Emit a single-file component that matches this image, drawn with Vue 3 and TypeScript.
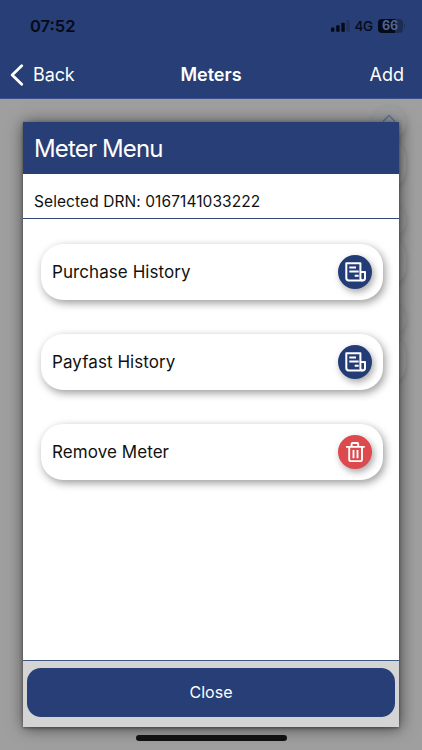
<script setup lang="ts">
interface MenuItem {
  label: string
  icon: 'news' | 'trash'
}

const items: MenuItem[] = [
  { label: 'Purchase History', icon: 'news' },
  { label: 'Payfast History', icon: 'news' },
  { label: 'Remove Meter', icon: 'trash' },
]
const meters: number[] = [1, 2, 3]
</script>

<template>
  <div class="screen">
    <header class="top">
      <div class="status">
        <span class="time">07:52</span>
        <div class="signals">
          <svg class="bars" width="19" height="12" viewBox="0 0 19 12">
            <rect x="0" y="7.5" width="3.4" height="4.3" rx="0.9" fill="#050a18" />
            <rect x="5.2" y="5.2" width="3.4" height="6.6" rx="0.9" fill="#050a18" />
            <rect x="10.4" y="2.7" width="3.4" height="9.1" rx="0.9" fill="#050a18" />
            <rect x="15.4" y="0" width="3.4" height="11.8" rx="0.9" fill="#21345f" />
          </svg>
          <span class="network">4G</span>
          <div class="battery"><span>66</span></div>
          <i class="nub"></i>
        </div>
      </div>
      <nav class="nav">
        <div class="back">
          <svg width="14" height="22" viewBox="0 0 14 22">
            <path d="M11.7 1.7 L2.2 11 L11.7 20.3" fill="none" stroke="#fff" stroke-width="2.8" stroke-linecap="round" stroke-linejoin="round" />
          </svg>
          <span>Back</span>
        </div>
        <h1>Meters</h1>
        <span class="add">Add</span>
      </nav>
    </header>

    <main class="backdrop">
      <div class="meters">
        <div v-for="m in meters" :key="m" class="meter">
          <div class="meter-badge">
            <svg v-if="m === 1" width="14" height="14" viewBox="0 0 14 14">
              <path d="M1 7.5 L7 1.5 L13 7.5" fill="none" stroke="#65799d" stroke-width="1.6" />
            </svg>
          </div>
        </div>
      </div>

      <section class="dialog">
        <h2>Meter Menu</h2>
        <p class="drn">Selected DRN: 0167141033222</p>
        <div class="list">
          <div v-for="item in items" :key="item.label" class="card">
            <span>{{ item.label }}</span>
            <div class="badge" :class="item.icon">
              <svg v-if="item.icon === 'news'" width="22" height="22" viewBox="0 0 22 22" fill="none" stroke="#fff" stroke-width="2" stroke-linejoin="round">
                <path d="M16.4 10.8V2.3H2.3V17Q2.3 19.4 4.7 19.4H18.5" />
                <path d="M16.4 10.9H21V17.3Q21 19.4 18.7 19.4Q16.4 19.4 16.4 17.3Z" />
                <path d="M5.3 6.6H12M5.3 10.6H14.7M10.7 14.7H14.7" />
              </svg>
              <svg v-else width="22" height="22" viewBox="0 0 22 22" fill="none" stroke="#fff" stroke-width="1.9" stroke-linejoin="round">
                <path d="M2 5.9H20.7M7.6 5.5V3Q7.6 2 8.6 2H13.2Q14.2 2 14.2 3V5.5M5.2 6V18.2Q5.2 20.1 7.1 20.1H16.1Q18 20.1 18 18.2V6" />
                <path d="M9.5 9V17.2M13.5 9V17.2" />
              </svg>
            </div>
          </div>
        </div>
        <footer>
          <button type="button">Close</button>
        </footer>
      </section>
      <div class="home"></div>
    </main>
  </div>
</template>

<style>
body {
  margin: 0;
  overflow: hidden;
}
</style>

<style scoped>
* {
  box-sizing: border-box;
}
.screen {
  width: 422px;
  height: 750px;
  display: flex;
  flex-direction: column;
  overflow: hidden;
  background: #9f9f9f;
  font-family: Inter, "Liberation Sans", sans-serif;
  color: #111;
}
.top {
  height: 99px;
  flex: none;
  background: #273e76;
  border-bottom: 1px solid #3a5288;
}
.status {
  height: 52px;
  display: flex;
  align-items: center;
  justify-content: space-between;
  padding: 0 17px 0 30px;
  color: #050a18;
}
.time {
  font-size: 16.5px;
  font-weight: 600;
  letter-spacing: 0;
  line-height: 20px;
}
.signals {
  display: flex;
  align-items: center;
}
.network {
  margin-left: 5px;
  width: 19px;
  font-size: 13.5px;
  font-weight: 500;
  letter-spacing: -0.3px;
  line-height: 16px;
}
.battery {
  margin-left: 4px;
  width: 25px;
  height: 13.5px;
  border-radius: 4px;
  background: linear-gradient(90deg, #050a18 66%, #1c2d55 66%);
  color: #52648f;
  font-size: 12.5px;
  font-weight: 700;
  line-height: 14px;
  text-align: center;
}
.nub {
  width: 1.5px;
  height: 4px;
  margin-left: 1px;
  border-radius: 0 2px 2px 0;
  background: #1c2d55;
}
.nav {
  height: 46px;
  display: grid;
  grid-template-columns: 1fr auto 1fr;
  align-items: center;
  padding: 0 18px 0 10px;
  color: #fff;
  font-size: 18px;
  line-height: 22px;
}
.back {
  display: flex;
  align-items: center;
  gap: 9px;
  letter-spacing: -0.1px;
}
.nav h1 {
  margin: 0 0 0 8px;
  font-size: 18px;
  font-weight: 600;
  letter-spacing: 0;
}
.add {
  text-align: right;
  letter-spacing: 0;
}
.backdrop {
  position: relative;
  flex: 1;
  display: flex;
  flex-direction: column;
  padding: 23px 23px 0;
}
.meters {
  position: absolute;
  top: 40px;
  left: 28px;
  width: 378px;
}
.meter {
  position: relative;
  height: 50px;
  margin-bottom: 48px;
  border-radius: 20px;
  background: #a0a0a0;
  box-shadow: 1px 2px 5px rgba(0, 0, 0, 0.11);
}
.meter-badge {
  position: absolute;
  right: 0;
  top: -33px;
  width: 34px;
  height: 34px;
  border-radius: 50%;
  background: #9b9d9f;
  box-shadow: 1px 2px 6px rgba(0, 0, 0, 0.1);
  display: flex;
  justify-content: center;
  padding-top: 8px;
}
.dialog {
  position: relative;
  width: 376px;
  height: 605px;
  flex: none;
  display: flex;
  flex-direction: column;
  background: #fff;
  box-shadow: 0 1px 3px rgba(0, 0, 0, 0.4), 1px 1px 15px rgba(0, 0, 0, 0.6);
}
.dialog h2 {
  margin: 0;
  height: 52px;
  flex: none;
  padding-left: 11px;
  background: #273e76;
  color: #fff;
  font-size: 24px;
  font-weight: 400;
  line-height: 53px;
  letter-spacing: -0.85px;
}
.drn {
  margin: 0;
  height: 45px;
  flex: none;
  padding: 18px 0 0 11px;
  border-bottom: 1px solid #34467e;
  font-size: 15.5px;
  line-height: 20px;
  letter-spacing: 0.08px;
}
.list {
  flex: 1;
  display: flex;
  flex-direction: column;
  gap: 34px;
  padding: 25px 16px 0 18px;
}
.card {
  height: 56px;
  display: flex;
  align-items: center;
  justify-content: space-between;
  padding: 0 11px;
  border-radius: 22px;
  background: #fff;
  box-shadow: 2px 3px 9px rgba(0, 0, 0, 0.4);
  font-size: 17px;
  line-height: 22px;
  letter-spacing: 0.07px;
}
.badge {
  width: 34px;
  height: 34px;
  border-radius: 50%;
  display: flex;
  align-items: center;
  justify-content: center;
  background: #243c76;
  box-shadow: 2px 3px 7px rgba(0, 0, 0, 0.35);
}
.badge.trash {
  background: #dc4a4d;
}
footer {
  height: 67px;
  flex: none;
  padding: 7px 4px 10px;
  border-top: 1px solid #405781;
  background: #d4d4d4;
}
button {
  display: block;
  width: 368px;
  height: 49px;
  margin: 0;
  padding: 0;
  border: 0;
  border-radius: 14px;
  background: #273e76;
  color: #fff;
  font: 400 16px/49px Inter, "Liberation Sans", sans-serif;
}
.home {
  width: 151px;
  height: 6px;
  flex: none;
  margin: 8px auto 0;
  border-radius: 3px;
  background: #111;
  position: relative;
}
</style>
